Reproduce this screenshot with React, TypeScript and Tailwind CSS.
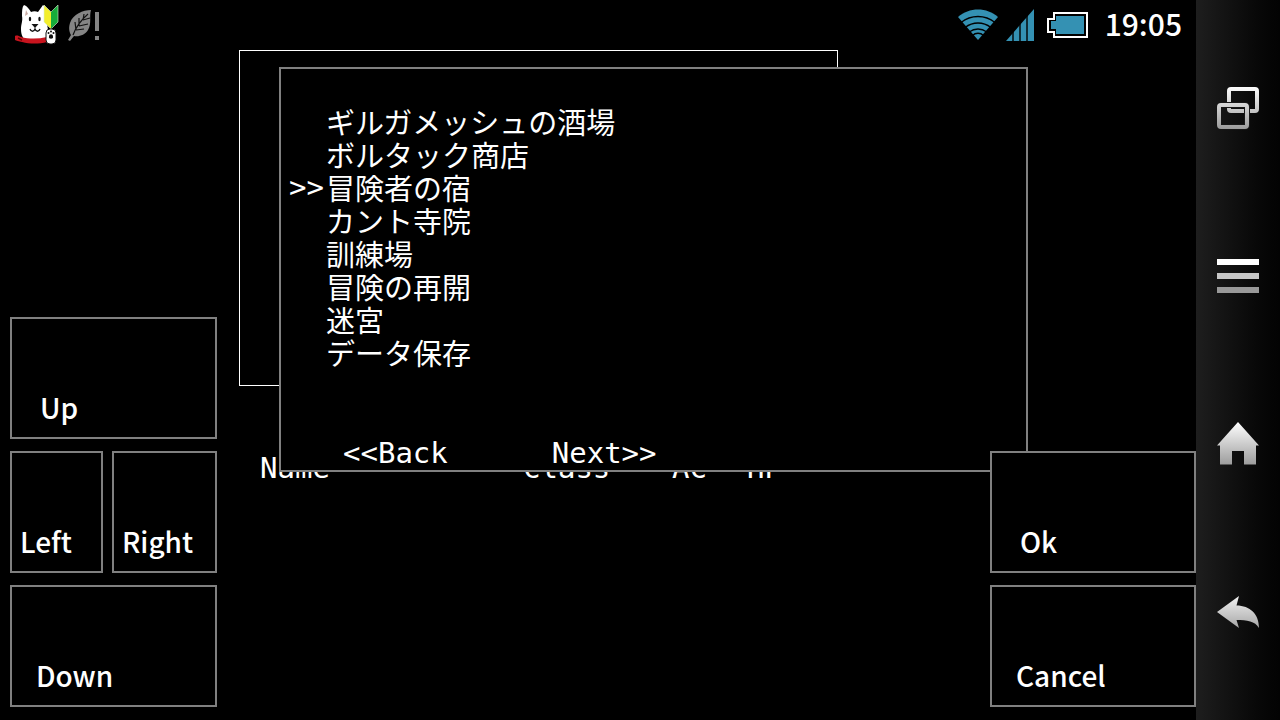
import type { ReactNode } from "react";

const JP_FONT = "font-['Noto_Sans_CJK_JP',sans-serif]";
const MONO_FONT = "font-['DejaVu_Sans_Mono','Noto_Sans_CJK_JP',monospace]";

const places = [
  "ギルガメッシュの酒場",
  "ボルタック商店",
  "冒険者の宿",
  "カント寺院",
  "訓練場",
  "冒険の再開",
  "迷宮",
  "データ保存",
];

const selected = 2;

function DogIcon() {
  return (
    <svg width="46" height="42" viewBox="0 0 46 42" aria-hidden="true">
      <path
        d="M7 25c0-5 2-8 1-13 0-5 0-9 2-11 3 1 5 4 7 7 2-1 5-1 7 0l5-7c3 2 3 8 3 12l2 13c0 5-1 9-3 11H13c-4-2-6-6-6-12z"
        fill="#fff"
      />
      <path d="M1 32c2-1 4 0 6 1 8 2 17 2 26 0v5c-8 2-17 2-25 0-3-1-6-1-7-2z" fill="#c8141e" />
      <path d="M4 34l4 2" stroke="#500" strokeWidth="1.5" />
      <path d="M12 6l2 4-3 2z" fill="#c9aaa2" />
      <ellipse cx="16" cy="15" rx="1.2" ry="2.2" fill="#111" />
      <ellipse cx="25.500" cy="15" rx="1.2" ry="2.2" fill="#111" />
      <path d="M17.500 20h7L21 24z" fill="#111" />
      <path d="M16 25c1 3 4 3 5 0 1 3 4 3 5 0" fill="none" stroke="#111" strokeWidth="1.3" />
      <path d="M30 1l7 7v17l-7-7z" fill="#f3ee2c" />
      <path d="M44 1l-7 7v17l7-7z" fill="#16ad3a" />
      <path d="M30 1l7 7 7-7v17l-7 7-7-7z" fill="none" stroke="#d6f0d0" strokeWidth="0.6" />
      <rect x="32" y="25" width="10" height="15" rx="4" fill="#fff" stroke="#111" strokeWidth="1" />
      <path d="M35 32.500c0-3 4-3 4 0 1 3-5 3-4 0z" fill="#111" />
      <circle cx="34.500" cy="29" r="1" fill="#111" />
      <circle cx="37" cy="27.500" r="1" fill="#111" />
      <circle cx="39.500" cy="29" r="1" fill="#111" />
    </svg>
  );
}

function LeafIcon() {
  return (
    <svg width="34" height="36" viewBox="0 0 34 36" aria-hidden="true">
      <path d="M23 3C15 3 5 7 2 16c-2 6 0 10 1 12l-3 5 2 1 4-5c5 1 11-1 14-6 4-7 1-13 3-20z" fill="#858585" />
      <path
        d="M5 28C8 20 13 13 20 7M8 23l-1-8m4 4l0-8m4 2l1-6M8 23l8-1m-5-3l9-2m-5-4l7-2"
        fill="none"
        stroke="#111"
        strokeWidth="1.2"
      />
      <path d="M27 5h4v19h-4zM27 29h4v4h-4z" fill="#858585" />
    </svg>
  );
}

function WifiIcon() {
  return (
    <svg width="40" height="32" viewBox="0 0 40 32" aria-hidden="true">
      <path d="M20 31L0 8C11-2 29-2 40 8z" fill="#3491b3" />
      <g fill="none" stroke="#000" strokeWidth="1.4">
        <path d="M3 13.500c10-8 24-8 34 0" />
        <path d="M7 18.500c8-6 18-6 26 0" />
        <path d="M11 23c6-4 12-4 18 0" />
        <path d="M14.500 26.500c3-3 8-3 11 0" />
      </g>
    </svg>
  );
}

function SignalIcon() {
  return (
    <svg width="28" height="32" viewBox="0 0 28 32" aria-hidden="true">
      <path d="M28 0v32H0z" fill="#3491b3" />
      <path d="M7 20v12M14 12v20M21 4v28" stroke="#000" strokeWidth="1.4" />
    </svg>
  );
}

function BatteryIcon() {
  return (
    <svg width="42" height="26" viewBox="0 0 42 26" aria-hidden="true">
      <path d="M7 1h33v24H7v-5H1V7h6z" fill="#000" stroke="#fff" strokeWidth="2" />
      <path d="M9 4h28v18H9v-5H4V9h5z" fill="#3491b3" />
    </svg>
  );
}

function NavButton({ label, children }: { label: string; children: ReactNode }) {
  return (
    <button aria-label={label} className="flex flex-1 items-center justify-center">
      <svg width="44" height="44" viewBox="0 0 44 44" aria-hidden="true">
        <defs>
          <linearGradient id="metal" gradientUnits="userSpaceOnUse" x1="0" y1="0" x2="0" y2="44">
            <stop offset="0" stopColor="#ffffff" />
            <stop offset="1" stopColor="#999999" />
          </linearGradient>
        </defs>
        {children}
      </svg>
    </button>
  );
}

function NavBar() {
  return (
    <nav className="flex w-[84px] shrink-0 flex-col bg-linear-to-r from-[#1e1e1e] to-[#030303] py-6">
      <NavButton label="Recent apps">
        <g fill="none" stroke="url(#metal)" strokeWidth="4">
          <rect x="13" y="3" width="28" height="22" rx="2" />
          <rect x="3" y="19" width="28" height="22" rx="2" stroke="#161616" strokeWidth="6" />
          <rect x="3" y="19" width="28" height="22" rx="2" />
        </g>
      </NavButton>
      <NavButton label="Menu">
        <rect x="1" y="5" width="42" height="6" fill="#ffffff" />
        <rect x="1" y="19" width="42" height="6" fill="#c6c6c6" />
        <rect x="1" y="33" width="42" height="6" fill="#999999" />
      </NavButton>
      <NavButton label="Home">
        <path d="M22 0l21 23.500h-3v19H28V29H16v13.500H4v-19H1z" fill="url(#metal)" />
      </NavButton>
      <NavButton label="Back">
        <path d="M1 22L23 6l-2.500 9.500C34 15.500 43 24 43 38 39 31 31 30 20.500 30L23 38z" fill="url(#metal)" />
      </NavButton>
    </nav>
  );
}

function PadButton({ label, className }: { label: string; className: string }) {
  return (
    <button
      className={`flex h-[122px] items-end border-2 border-[#808080] bg-black pb-[10px] text-left text-[28px] leading-10 font-medium ${className}`}
    >
      {label}
    </button>
  );
}

function TownMenu() {
  return (
    <div
      className={`absolute top-[17px] -right-[38px] left-10 border-2 border-[#808080] bg-black text-[29px] leading-[33px] ${MONO_FONT}`}
    >
      <ul className="pt-9 pl-2">
        {places.map((place, i) => (
          <li key={place}>
            <button className="flex text-left">
              <span className="w-[37px]">{i === selected ? ">>" : ""}</span>
              <span className={JP_FONT}>{place}</span>
            </button>
          </li>
        ))}
      </ul>
      <div className="flex gap-[104px] pt-[68px] pl-[62px]">
        <button>&lt;&lt;Back</button>
        <button>Next&gt;&gt;</button>
      </div>
    </div>
  );
}

function PartyTable() {
  return (
    <table className={`mt-[66px] ml-[21px] text-left text-[29px] leading-[33px] ${MONO_FONT}`}>
      <thead>
        <tr>
          <th className="w-[263px] p-0 font-normal">Name</th>
          <th className="w-[149px] p-0 font-normal">Class</th>
          <th className="w-[75px] p-0 font-normal">AC</th>
          <th className="p-0 font-normal">HP</th>
        </tr>
      </thead>
    </table>
  );
}

export default function App() {
  return (
    <div className={`flex min-h-screen bg-black text-white ${JP_FONT}`}>
      <div className="flex min-w-0 flex-1 flex-col">
        <header className="flex h-[50px] items-center justify-between px-[14px]">
          <div className="flex items-center gap-2">
            <DogIcon />
            <LeafIcon />
          </div>
          <div className="flex items-center">
            <WifiIcon />
            <span className="ml-2">
              <SignalIcon />
            </span>
            <span className="ml-[13px]">
              <BatteryIcon />
            </span>
            <time className="ml-4 pb-1 text-[30px] leading-10 font-medium">19:05</time>
          </div>
        </header>

        <main className="flex flex-1">
          <div className="flex w-[217px] shrink-0 flex-col justify-end gap-3 pb-[13px] pl-[10px]">
            <PadButton label="Up" className="pl-7" />
            <div className="flex gap-[9px]">
              <PadButton label="Left" className="w-[93px] pl-2" />
              <PadButton label="Right" className="flex-1 pl-2" />
            </div>
            <PadButton label="Down" className="pl-6" />
          </div>

          <section className="relative ml-[22px] min-w-0 flex-1">
            <div className="h-[336px] w-full max-w-[599px] border border-white" />
            <PartyTable />
            <TownMenu />
          </section>

          <div className="z-10 flex w-[206px] shrink-0 flex-col justify-end gap-3 pb-[13px]">
            <PadButton label="Ok" className="pl-7" />
            <PadButton label="Cancel" className="pl-6" />
          </div>
        </main>
      </div>
      <NavBar />
    </div>
  );
}
